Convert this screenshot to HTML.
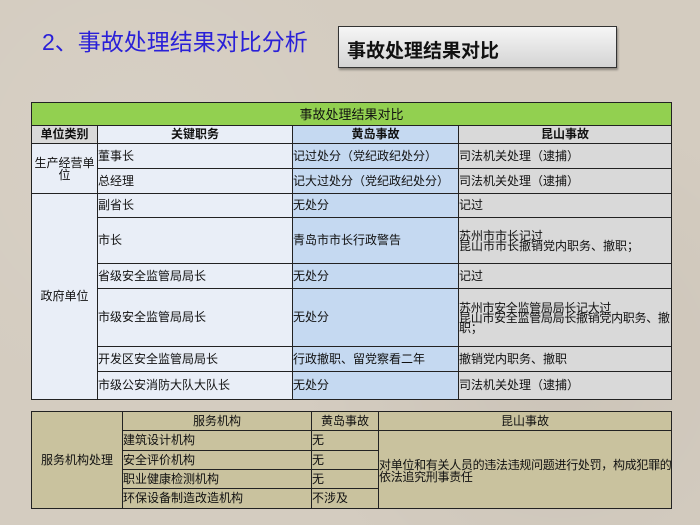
<!DOCTYPE html>
<html><head><meta charset="utf-8"><style>
*{margin:0;padding:0;box-sizing:border-box}
body{width:700px;height:525px;overflow:hidden;background:#d4ccc0;font-family:"Liberation Sans","Noto Sans CJK SC",sans-serif;position:relative;
background-image:radial-gradient(circle at 20% 30%,rgba(255,255,255,.08),transparent 40%),radial-gradient(circle at 80% 70%,rgba(0,0,0,.04),transparent 40%);}
.t{position:absolute;left:42px;top:23px;font-size:23px;color:#2a20d8;white-space:nowrap}
.box{position:absolute;left:338px;top:26px;width:279px;height:42px;border:1px solid #333;background:linear-gradient(#f6f6f6,#d4d4d4);box-shadow:1px 2px 2px rgba(0,0,0,.35);font-weight:bold;font-size:19px;padding:9px 0 0 8px;color:#111}
.c{position:absolute;font-size:12px;line-height:13px;color:#111;display:flex;align-items:center;white-space:nowrap;overflow:hidden;border-right:1px solid #222;border-bottom:1px solid #222}
.ctr{justify-content:center;text-align:center}
.g{background:#92d050}
.a{background:#e9eef7}
.b{background:#c5d9f1}
.d{background:#d9d9d9}
.k{background:#c9c29e}
.hd{font-weight:bold}
</style></head><body>
<div class="t">2、事故处理结果对比分析</div>
<div class="box">事故处理结果对比</div>

<div style="position:absolute;left:31px;top:102px;width:641px;height:298px;border:1px solid #222;border-right:0;border-bottom:0"></div>
<div class="c g ctr" style="left:32px;top:103px;width:640px;height:23px;font-size:13px">事故处理结果对比</div>
<div class="c d ctr hd" style="left:32px;top:126px;width:66px;height:18px">单位类别</div>
<div class="c a ctr hd" style="left:98px;top:126px;width:195px;height:18px">关键职务</div>
<div class="c b ctr hd" style="left:293px;top:126px;width:166px;height:18px">黄岛事故</div>
<div class="c d ctr hd" style="left:459px;top:126px;width:213px;height:18px">昆山事故</div>

<div class="c a ctr" style="left:32px;top:144px;width:66px;height:50px;white-space:normal;line-height:12px">生产经营单位</div>
<div class="c a" style="left:98px;top:144px;width:195px;height:25px">董事长</div>
<div class="c b" style="left:293px;top:144px;width:166px;height:25px">记过处分（党纪政纪处分）</div>
<div class="c d" style="left:459px;top:144px;width:213px;height:25px">司法机关处理（逮捕）</div>
<div class="c a" style="left:98px;top:169px;width:195px;height:25px">总经理</div>
<div class="c b" style="left:293px;top:169px;width:166px;height:25px">记大过处分（党纪政纪处分）</div>
<div class="c d" style="left:459px;top:169px;width:213px;height:25px">司法机关处理（逮捕）</div>

<div class="c a ctr" style="left:32px;top:194px;width:66px;height:206px">政府单位</div>
<div class="c a" style="left:98px;top:194px;width:195px;height:24px">副省长</div>
<div class="c b" style="left:293px;top:194px;width:166px;height:24px">无处分</div>
<div class="c d" style="left:459px;top:194px;width:213px;height:24px">记过</div>
<div class="c a" style="left:98px;top:218px;width:195px;height:46px">市长</div>
<div class="c b" style="left:293px;top:218px;width:166px;height:46px">青岛市市长行政警告</div>
<div class="c d" style="left:459px;top:218px;width:213px;height:46px;line-height:10px">苏州市市长记过<br>昆山市市长撤销党内职务、撤职；</div>
<div class="c a" style="left:98px;top:264px;width:195px;height:25px">省级安全监管局局长</div>
<div class="c b" style="left:293px;top:264px;width:166px;height:25px">无处分</div>
<div class="c d" style="left:459px;top:264px;width:213px;height:25px">记过</div>
<div class="c a" style="left:98px;top:289px;width:195px;height:58px">市级安全监管局局长</div>
<div class="c b" style="left:293px;top:289px;width:166px;height:58px">无处分</div>
<div class="c d" style="left:459px;top:289px;width:213px;height:58px;line-height:10px;letter-spacing:-0.3px">苏州市安全监管局局长记大过<br>昆山市安全监管局局长撤销党内职务、撤<br>职；</div>
<div class="c a" style="left:98px;top:347px;width:195px;height:25px">开发区安全监管局局长</div>
<div class="c b" style="left:293px;top:347px;width:166px;height:25px">行政撤职、留党察看二年</div>
<div class="c d" style="left:459px;top:347px;width:213px;height:25px">撤销党内职务、撤职</div>
<div class="c a" style="left:98px;top:372px;width:195px;height:28px">市级公安消防大队大队长</div>
<div class="c b" style="left:293px;top:372px;width:166px;height:28px">无处分</div>
<div class="c d" style="left:459px;top:372px;width:213px;height:28px">司法机关处理（逮捕）</div>

<div style="position:absolute;left:31px;top:411px;width:641px;height:98px;border:1px solid #222;border-right:0;border-bottom:0"></div>
<div class="c k ctr" style="left:32px;top:412px;width:91px;height:97px">服务机构处理</div>
<div class="c k ctr" style="left:123px;top:412px;width:189px;height:19px">服务机构</div>
<div class="c k ctr" style="left:312px;top:412px;width:67px;height:19px">黄岛事故</div>
<div class="c k ctr" style="left:379px;top:412px;width:293px;height:19px">昆山事故</div>
<div class="c k" style="left:123px;top:431px;width:189px;height:20px">建筑设计机构</div>
<div class="c k" style="left:312px;top:431px;width:67px;height:20px">无</div>
<div class="c k" style="left:123px;top:451px;width:189px;height:19px">安全评价机构</div>
<div class="c k" style="left:312px;top:451px;width:67px;height:19px">无</div>
<div class="c k" style="left:123px;top:470px;width:189px;height:19px">职业健康检测机构</div>
<div class="c k" style="left:312px;top:470px;width:67px;height:19px">无</div>
<div class="c k" style="left:123px;top:489px;width:189px;height:20px">环保设备制造改造机构</div>
<div class="c k" style="left:312px;top:489px;width:67px;height:20px">不涉及</div>
<div class="c k" style="left:379px;top:431px;width:293px;height:78px;line-height:12px;align-items:flex-start;padding-top:28px;letter-spacing:-0.3px">对单位和有关人员的违法违规问题进行处罚，构成犯罪的<br>依法追究刑事责任</div>
</body></html>
